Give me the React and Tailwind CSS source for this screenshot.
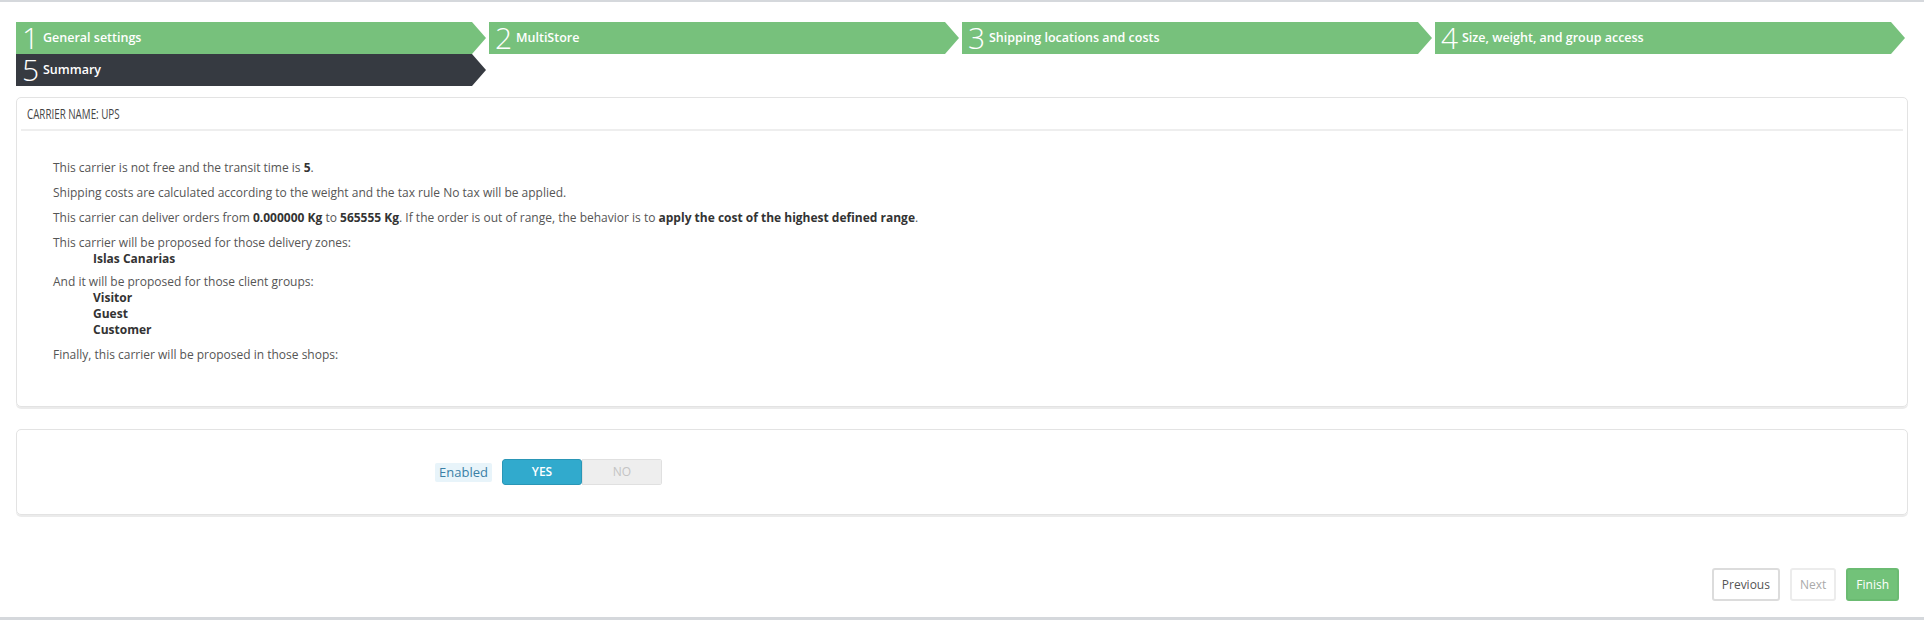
import React from 'react'

const STEPS = [
  { n: 1, label: 'General settings', done: true },
  { n: 2, label: 'MultiStore', done: true },
  { n: 3, label: 'Shipping locations and costs', done: true },
  { n: 4, label: 'Size, weight, and group access', done: true },
  { n: 5, label: 'Summary', done: false },
]

function Step({ n, label, done }) {
  return (
    <div className="w-1/4 pr-[3px]">
      <div
        className={
          'h-[32px] flex items-center pl-[6px] text-white [clip-path:polygon(0_0,calc(100%_-_14px)_0,100%_50%,calc(100%_-_14px)_100%,0_100%)] ' +
          (done ? 'bg-[#77c17c]' : 'bg-[#363a41]')
        }
      >
        <span className="text-[30px] leading-[30px] font-light w-[21px]">{n}</span>
        <span className="text-[12.5px] font-semibold">{label}</span>
      </div>
    </div>
  )
}

export default function App() {
  return (
    <div className="h-[620px] w-[1924px] bg-white flex flex-col border-t-2 border-b-[3px] border-[#d5d8dc] font-['Open_Sans',sans-serif] text-[#555]">
      <div className="flex-1 px-[16px] pt-[20px]">
        <div className="flex flex-wrap">
          {STEPS.map((s) => <Step key={s.n} {...s} />)}
        </div>

        <div className="mt-[11px] h-[310px] border border-[#e3e3e3] rounded-[5px] shadow-[0_2px_0_rgba(0,0,0,0.08)] px-[4px]">
          <div className="h-[33px] flex items-center px-[6px] border-b-2 border-[#eeeeee]">
            <span className="inline-block origin-left scale-x-[0.7] text-[14px] font-medium text-[#444] uppercase whitespace-nowrap">
              Carrier name: UPS
            </span>
          </div>
          <div className="pt-[29px] pl-[32px] text-[12px] leading-[16px]">
            <p className="mb-[9px]">This carrier is not free and the transit time is <b className="text-[#333]">5</b>.</p>
            <p className="mb-[9px]">Shipping costs are calculated according to the weight and the tax rule No tax will be applied.</p>
            <p className="mb-[9px]">
              This carrier can deliver orders from <b className="text-[#333]">0.000000 Kg</b> to <b className="text-[#333]">565555 Kg</b>. If the order is out of range, the behavior is to <b className="text-[#333]">apply the cost of the highest defined range</b>.
            </p>
            <div className="mb-[7px]">
              <p>This carrier will be proposed for those delivery zones:</p>
              <ul className="pl-[40px] font-bold text-[#333]">
                <li>Islas Canarias</li>
              </ul>
            </div>
            <div className="mb-[9px]">
              <p>And it will be proposed for those client groups:</p>
              <ul className="pl-[40px] font-bold text-[#333]">
                <li>Visitor</li>
                <li>Guest</li>
                <li>Customer</li>
              </ul>
            </div>
            <p>Finally, this carrier will be proposed in those shops:</p>
          </div>
        </div>

        <div className="mt-[22px] h-[86px] border border-[#e3e3e3] rounded-[5px] shadow-[0_2px_0_rgba(0,0,0,0.08)] flex items-center">
          <div className="w-[475px] flex justify-end">
            <span className="bg-[#e8f4fa] text-[#3a7fa6] text-[13px] leading-[19px] px-[4px] rounded-[2px]">Enabled</span>
          </div>
          <div className="ml-[10px] flex w-[160px] h-[26px] rounded-[3px] overflow-hidden text-[12px] font-semibold">
            <span className="w-1/2 flex items-center justify-center bg-[#31aacd] border border-[#2a96b6] rounded-[3px] text-white">YES</span>
            <span className="w-1/2 flex items-center justify-center bg-[#eeeeee] border border-[#e0e0e0] text-[#c4c4c4] font-normal">NO</span>
          </div>
        </div>

        <div className="mt-[53px] flex justify-end gap-[10px] pr-[9px] text-[12px]">
          <button className="h-[33px] px-[8px] bg-white border-2 border-[#dcdcdc] rounded-[3px] text-[#555]">Previous</button>
          <button className="h-[33px] px-[8px] bg-white border-2 border-[#ececec] rounded-[3px] text-[#aaa]">Next</button>
          <button className="h-[33px] px-[8px] bg-[#72c279] border-2 border-[#6bbb72] rounded-[3px] text-white">Finish</button>
        </div>
      </div>
    </div>
  )
}
